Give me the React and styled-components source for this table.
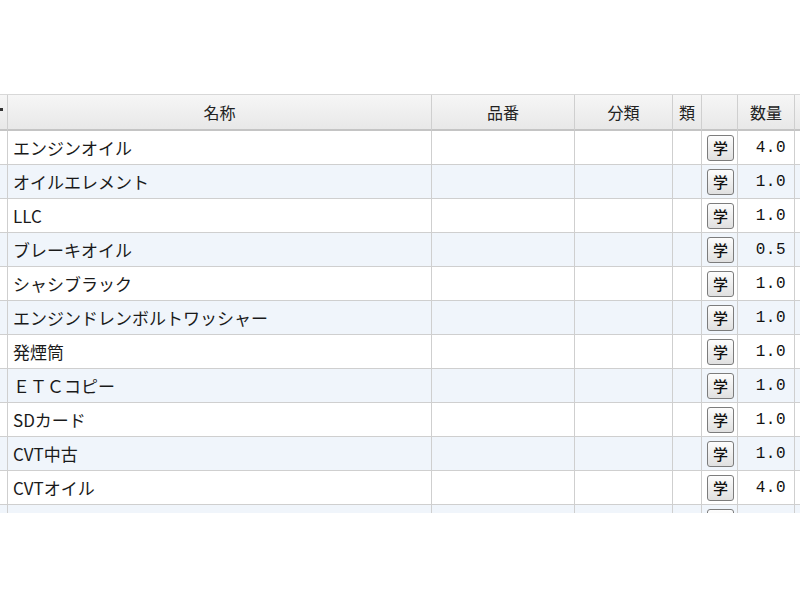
import React from "react";
import styled, { createGlobalStyle } from "styled-components";

const GlobalStyle = createGlobalStyle`
  body {
    margin: 0;
    background: #ffffff;
    font-family: "Noto Sans CJK JP", "DejaVu Sans", sans-serif;
  }
`;

const Page = styled.div`
  width: 800px;
  height: 600px;
  padding-top: 94px;
  box-sizing: border-box;
  overflow: hidden;
  background: #ffffff;
`;

const Grid = styled.div`
  display: grid;
  grid-template-columns: 8px 424px 143px 98px 29px 36px 57px 30px;
  grid-template-rows: 36px;
  grid-auto-rows: 34px;
  height: 418px;
  overflow: hidden;
  border-top: 1px solid #d8d8d8;
`;

const HeadCell = styled.div`
  display: flex;
  align-items: center;
  justify-content: center;
  box-sizing: border-box;
  background: linear-gradient(#f6f6f6, #e8e8e8);
  border-right: 1px solid #cfcfcf;
  border-bottom: 2px solid #c4c4c4;
  font-size: 16px;
  color: #222;
  white-space: nowrap;
  overflow: hidden;
`;

const SortMark = styled.span`
  display: block;
  width: 3px;
  height: 3px;
  margin-left: -4px;
  margin-top: -6px;
  background: #333;
`;

const Cell = styled.div`
  display: flex;
  align-items: center;
  justify-content: ${(p) => (p.$align === "right" ? "flex-end" : p.$align === "center" ? "center" : "flex-start")};
  padding: ${(p) => (p.$align === "right" ? "0 8px 0 0" : p.$align === "center" ? "0" : "0 0 0 5px")};
  box-sizing: border-box;
  background: ${(p) => (p.$alt ? "#f0f5fb" : "#ffffff")};
  border-right: 1px solid #cfcfcf;
  border-bottom: 1px solid #cfcfcf;
  font-size: 17px;
  color: #1a1a1a;
  white-space: nowrap;
  overflow: hidden;
`;

const Qty = styled.span`
  font-family: "Liberation Mono", "DejaVu Sans Mono", monospace;
  font-size: 16px;
  letter-spacing: 0.5px;
  color: #111;
`;

const LearnButton = styled.button`
  width: 27px;
  height: 26px;
  padding: 0;
  margin-left: 2px;
  border: 1px solid #7c7c7c;
  border-radius: 3px;
  background: linear-gradient(#fdfdfd, #e0e0e0);
  font-family: "Noto Sans CJK JP", sans-serif;
  font-size: 15px;
  font-weight: 500;
  color: #111;
  line-height: 1;
  cursor: pointer;
`;

const items = [
  { name: "エンジンオイル", qty: "4.0" },
  { name: "オイルエレメント", qty: "1.0" },
  { name: "LLC", qty: "1.0" },
  { name: "ブレーキオイル", qty: "0.5" },
  { name: "シャシブラック", qty: "1.0" },
  { name: "エンジンドレンボルトワッシャー", qty: "1.0" },
  { name: "発煙筒", qty: "1.0" },
  { name: "ＥＴＣコピー", qty: "1.0" },
  { name: "SDカード", qty: "1.0" },
  { name: "CVT中古", qty: "1.0" },
  { name: "CVTオイル", qty: "4.0" },
  { name: "", qty: "", partial: true },
];

const App = () => {
  return (
    <>
      <GlobalStyle />
      <Page>
        <Grid>
          <HeadCell>
            <SortMark />
          </HeadCell>
          <HeadCell>名称</HeadCell>
          <HeadCell>品番</HeadCell>
          <HeadCell>分類</HeadCell>
          <HeadCell>類</HeadCell>
          <HeadCell></HeadCell>
          <HeadCell>数量</HeadCell>
          <HeadCell></HeadCell>
          {items.map((item, i) => {
            const alt = i % 2 === 1;
            return (
              <React.Fragment key={i}>
                <Cell $alt={alt} />
                <Cell $alt={alt}>{item.name}</Cell>
                <Cell $alt={alt} />
                <Cell $alt={alt} />
                <Cell $alt={alt} />
                <Cell $alt={alt} $align="center">
                  <LearnButton aria-label="学">{item.partial ? "" : "学"}</LearnButton>
                </Cell>
                <Cell $alt={alt} $align="right">
                  <Qty>{item.qty}</Qty>
                </Cell>
                <Cell $alt={alt} />
              </React.Fragment>
            );
          })}
        </Grid>
      </Page>
    </>
  );
};

export default App;
